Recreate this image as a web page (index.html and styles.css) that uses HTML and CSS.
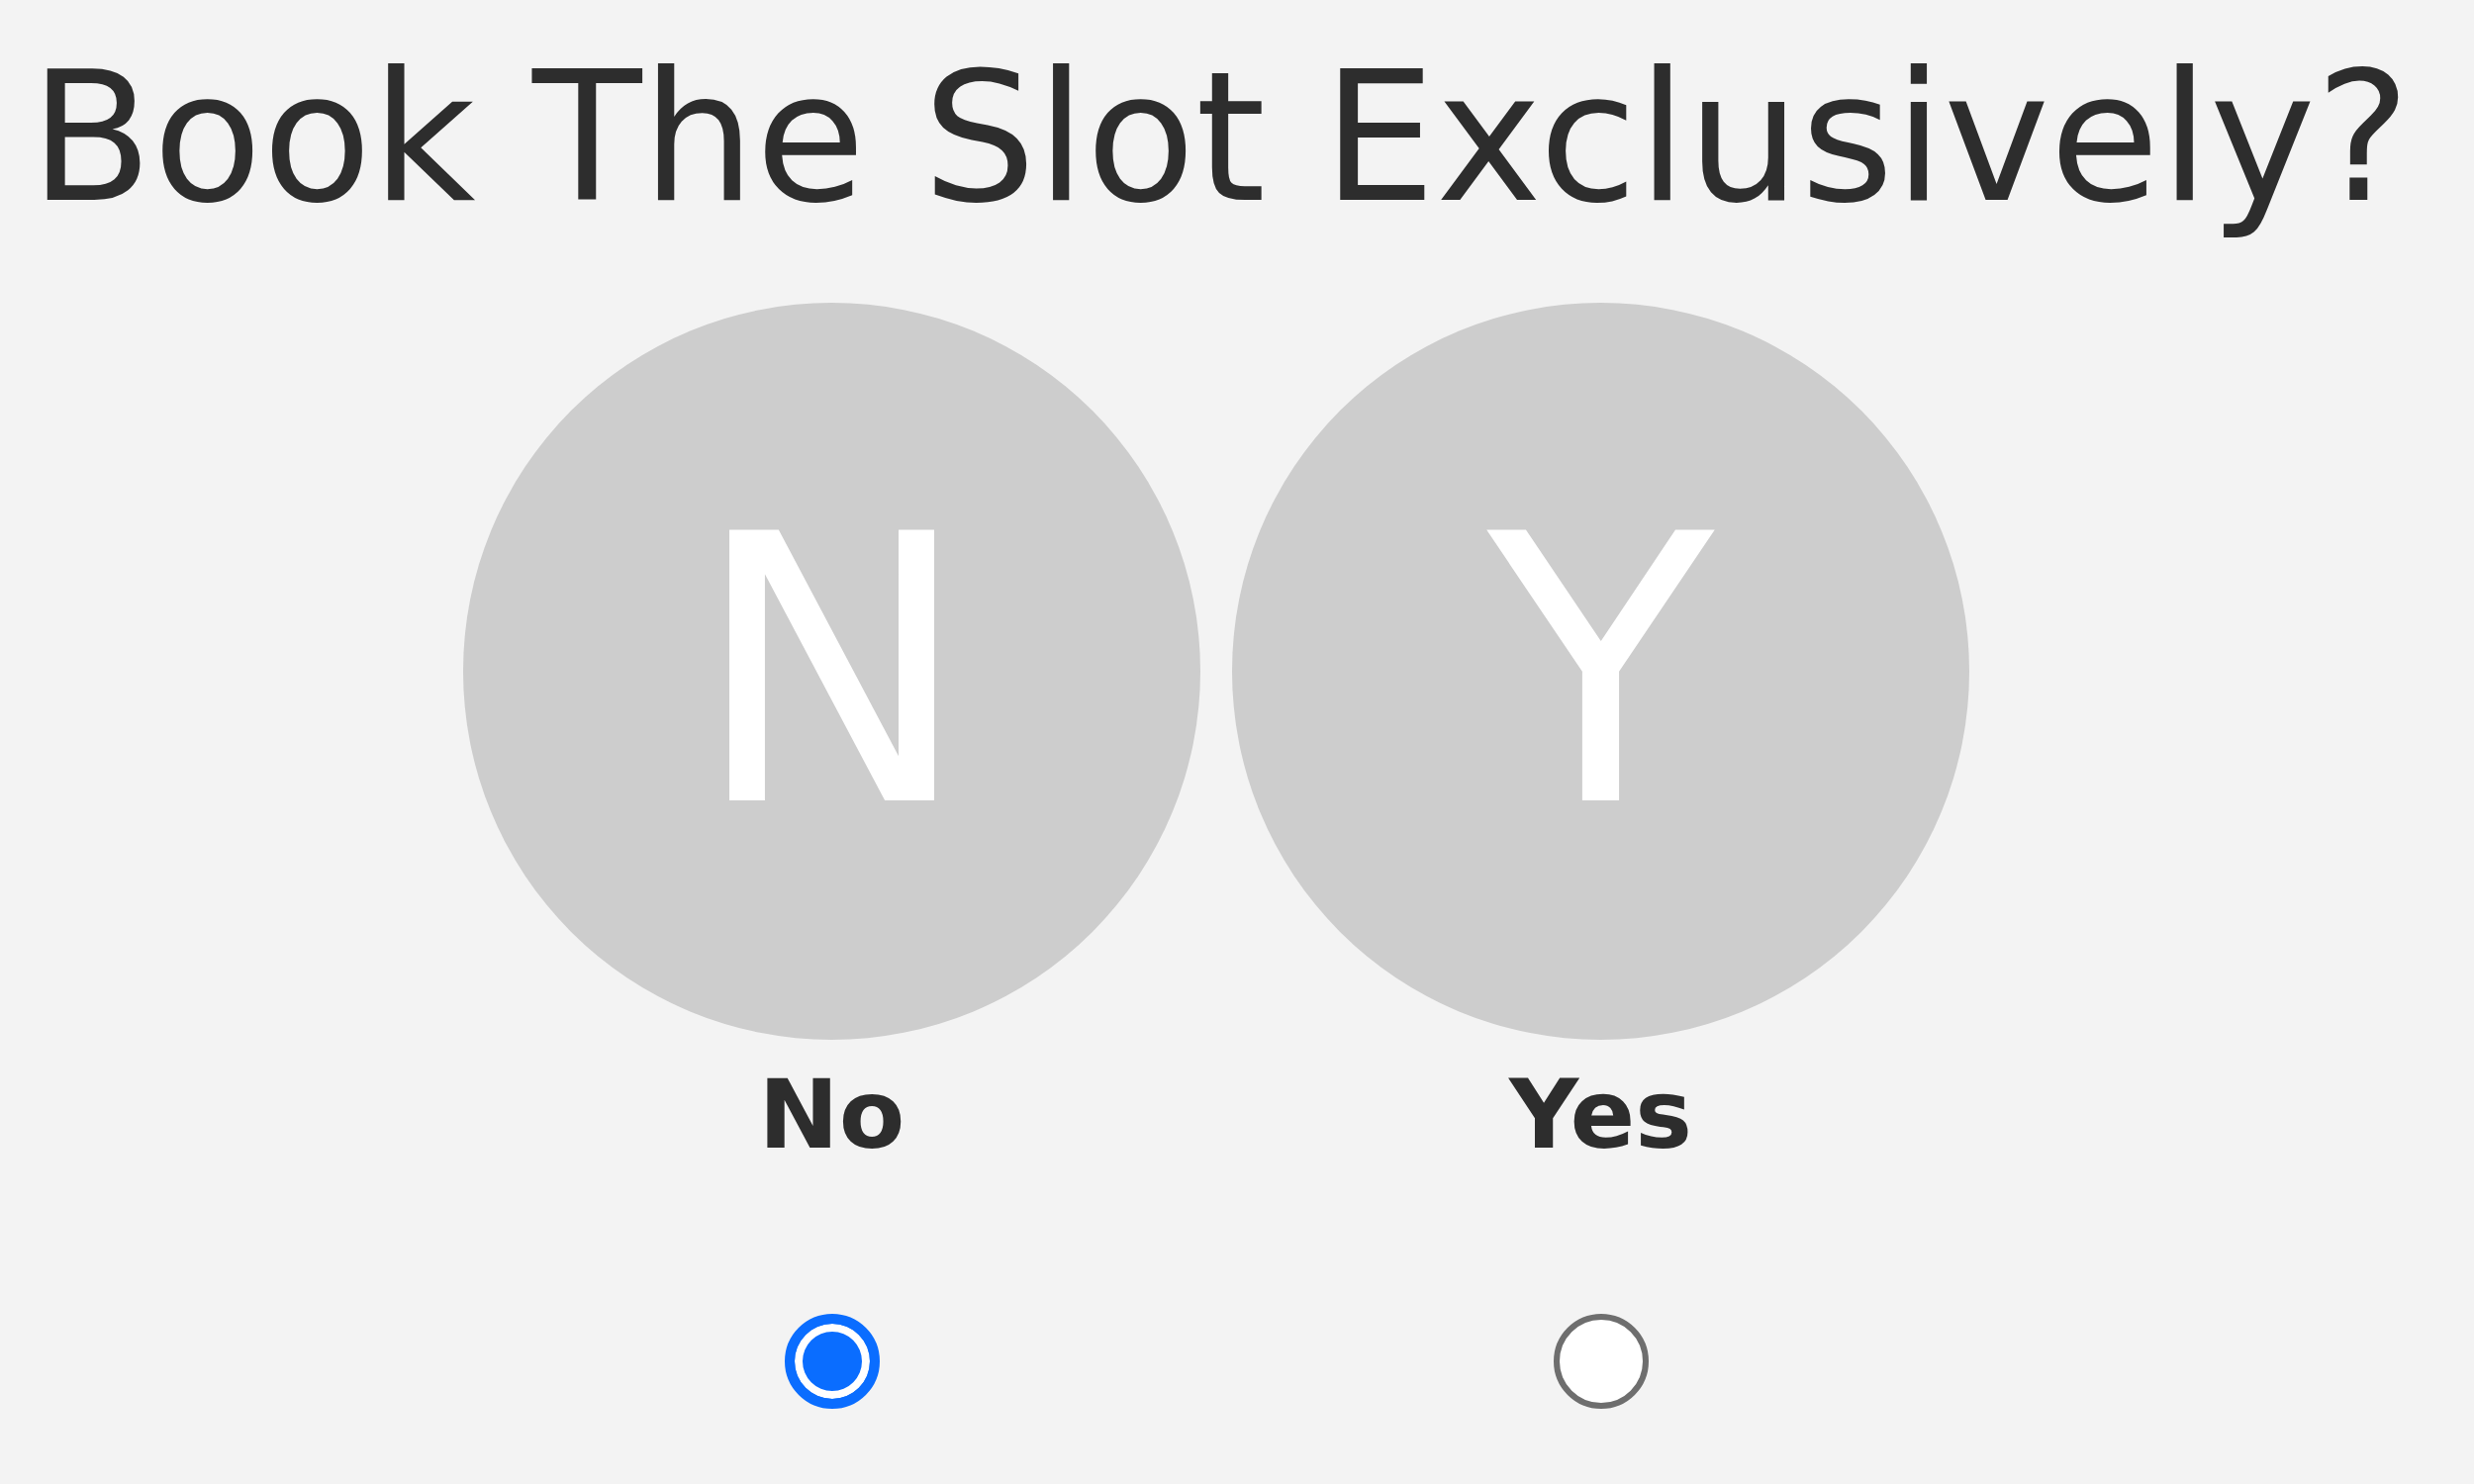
FILE: index.html
```html
<!doctype html>
<html>
	<head>
		<meta http-equiv="Content-Type" content="text/html; charset=utf-8" />
		<meta name="viewport" content="width=device-width, initial-scale=1.0" />
		<title>Book The Slot</title>
		<link rel="stylesheet" href="styles.css">
	</head>
	<body>
		<h1 class="class___title">Book The Slot Exclusively?</h1>
		<div class="class___options">
			<label class="class___option">
				<div class="class___circle">N</div>
				<div class="class___label">No</div>
				<input class="class___radio" type="radio" name="exclusive" value="no" checked />
			</label>
			<label class="class___option">
				<div class="class___circle">Y</div>
				<div class="class___label">Yes</div>
				<input class="class___radio" type="radio" name="exclusive" value="yes" />
			</label>
		</div>
	</body>
</html>
```

FILE: styles.css
```css
body {
	margin : 0;
	background-color : #f3f3f3;
	font-family : "DejaVu Sans", Verdana, sans-serif;
	color : #2d2d2d;
}
.class___title {
	margin : 0;
	padding : 34px 0 0 30px;
	font-size : 181px;
	font-weight : normal;
	line-height : normal;
}
.class___options {
	display : flex;
	gap : 32px;
	padding-left : 468px;
	margin-top : 61px;
}
.class___option {
	display : flex;
	flex-direction : column;
	align-items : center;
	width : 745px;
	cursor : pointer;
}
.class___circle {
	display : flex;
	align-items : center;
	justify-content : center;
	width : 745px;
	height : 745px;
	border-radius : 50%;
	background-color : #cdcdcd;
	color : #ffffff;
	font-size : 375px;
	line-height : normal;
}
.class___label {
	margin-top : 19px;
	font-size : 97px;
	font-weight : bold;
	line-height : normal;
}
.class___radio {
	appearance : none;
	-webkit-appearance : none;
	box-sizing : border-box;
	width : 96px;
	height : 96px;
	margin : 145px 0 0 0;
	border : 6px solid #6e6e6e;
	border-radius : 50%;
	background-color : #ffffff;
}
.class___radio:checked {
	border : 10px solid #0a6dff;
	background-color : #0a6dff;
	box-shadow : inset 0 0 0 8px #ffffff;
}
```
